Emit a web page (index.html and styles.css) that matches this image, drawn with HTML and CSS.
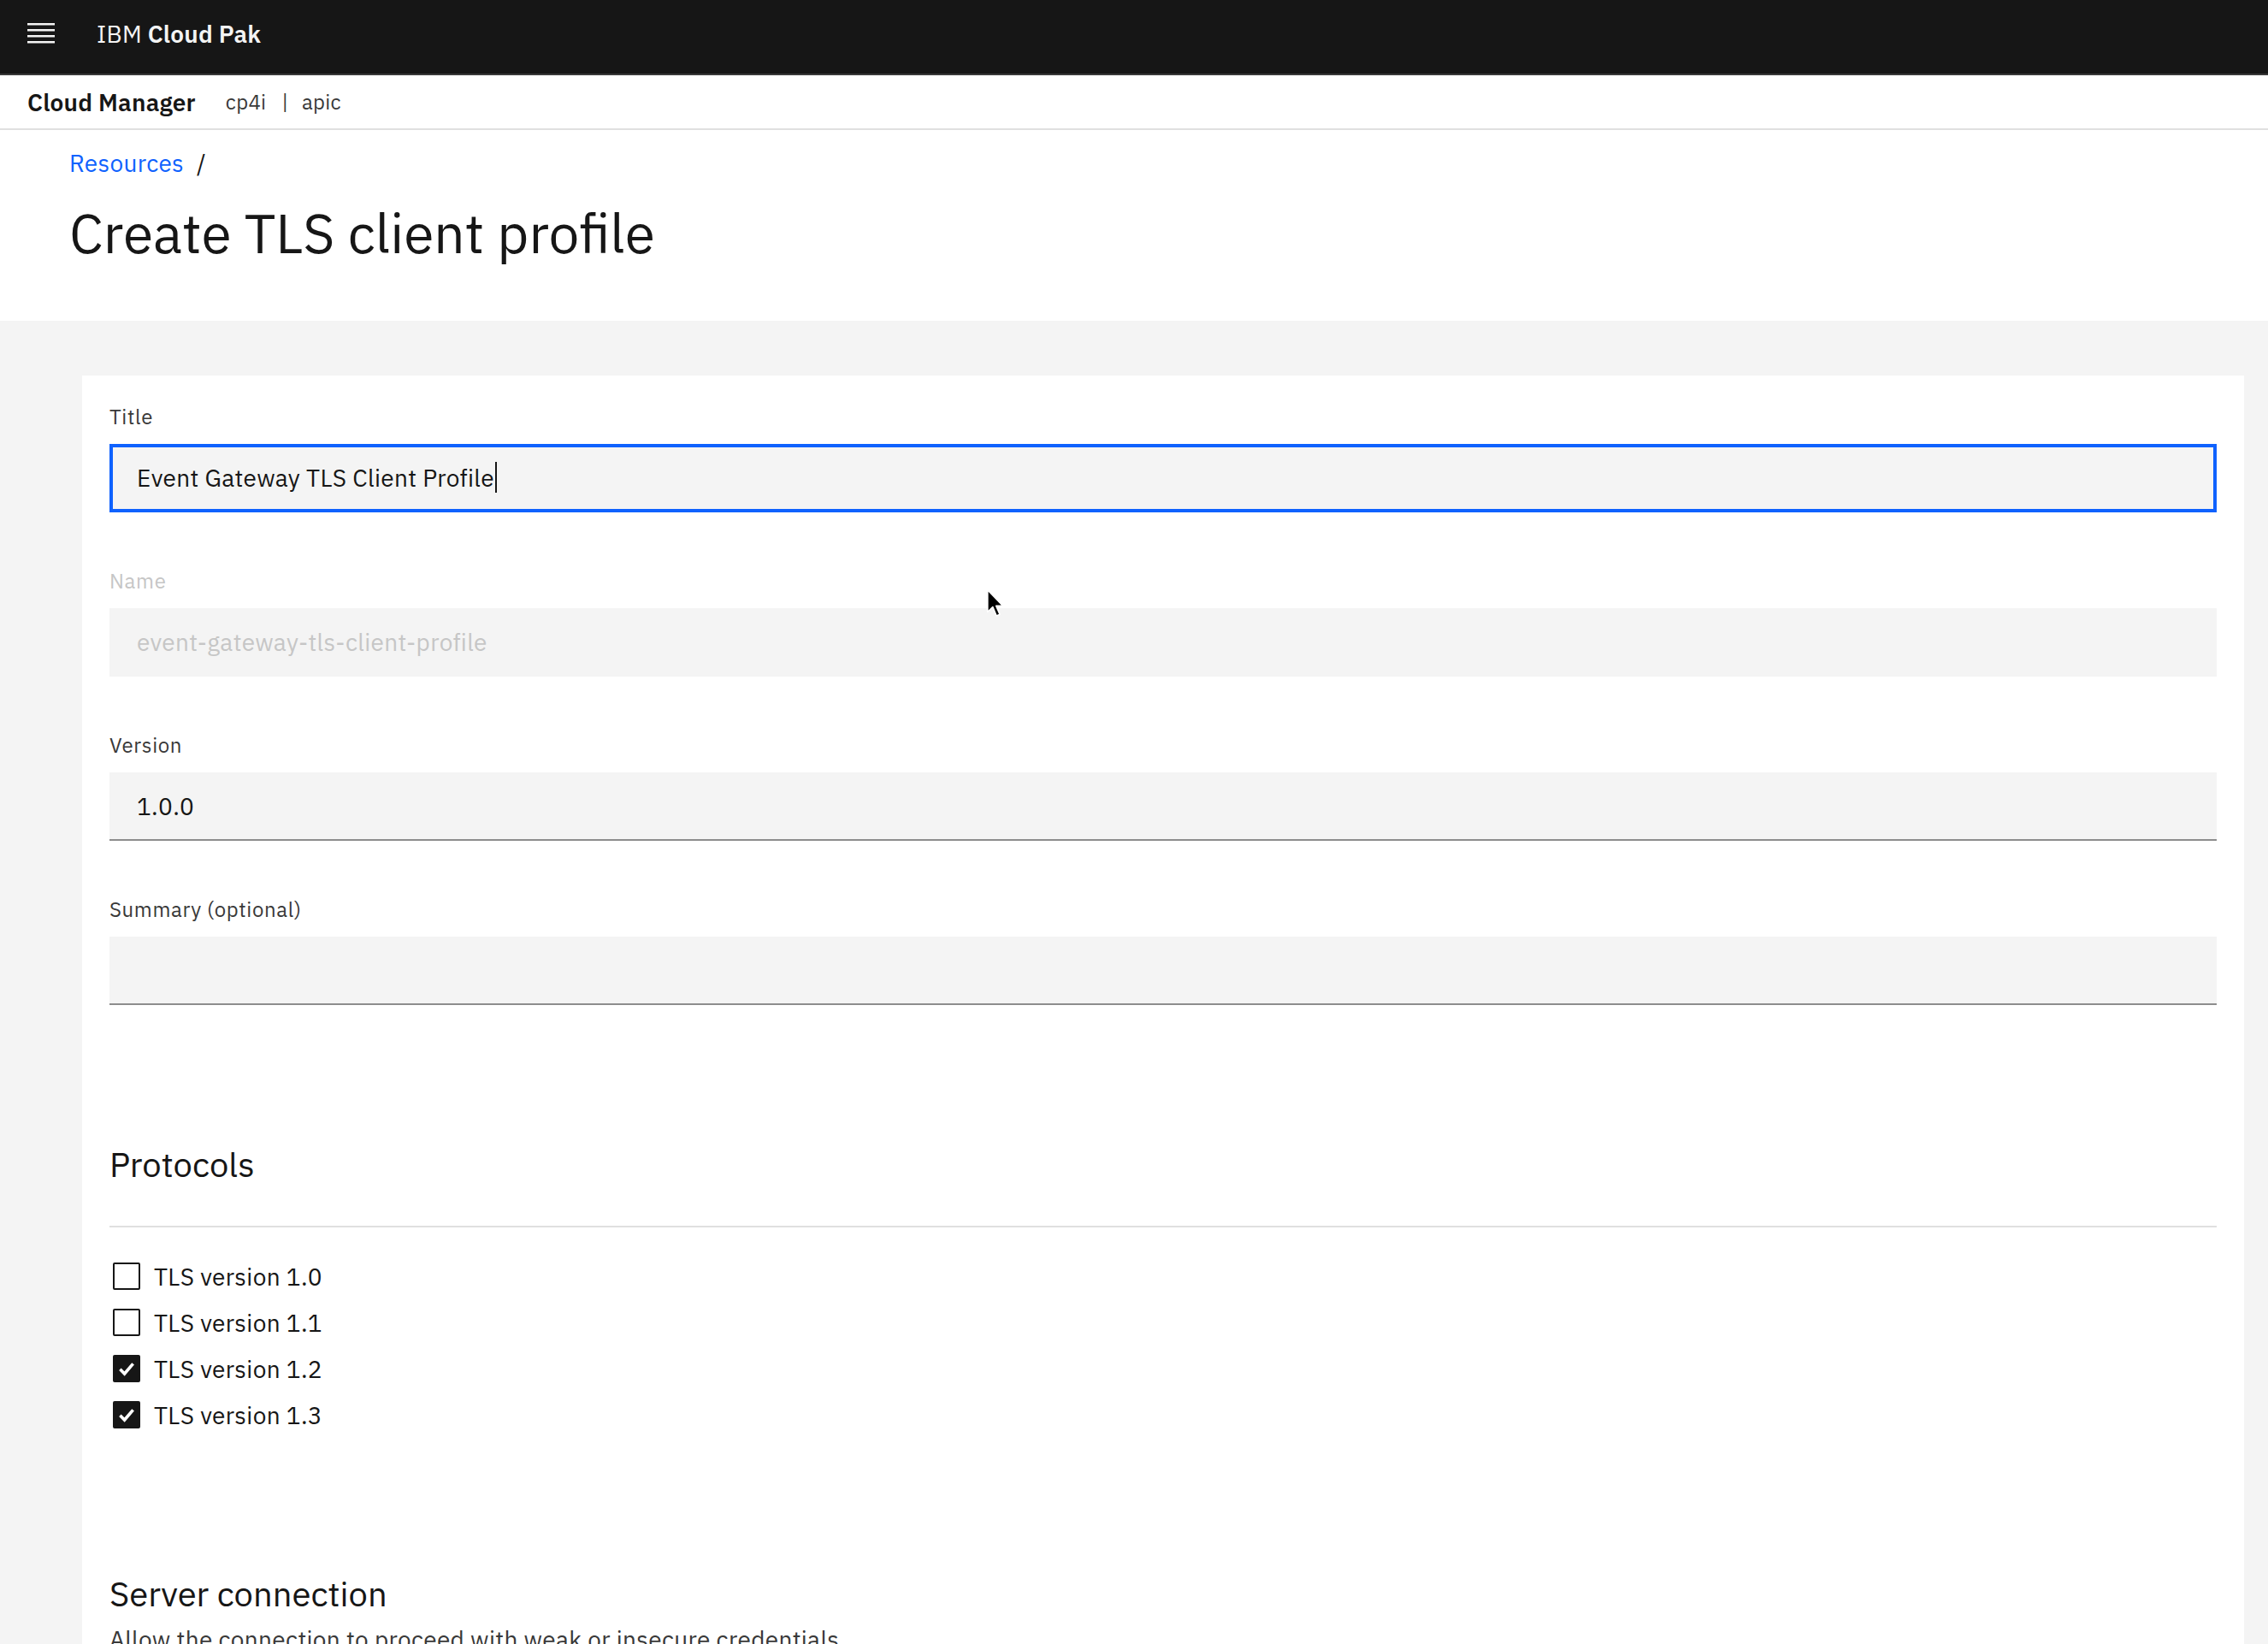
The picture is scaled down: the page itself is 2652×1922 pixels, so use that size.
FILE: index.html
```html
<!DOCTYPE html>
<html lang="en">
<head>
<meta charset="utf-8">
<title>Create TLS client profile</title>
<link rel="stylesheet" href="styles.css">
</head>
<body>
<header class="shell">
  <span class="menu-btn" aria-label="Menu">
    <svg width="32" height="24" viewBox="0 0 32 24" aria-hidden="true">
      <rect x="0" y="0" width="32" height="2.5" fill="#f4f4f4"/>
      <rect x="0" y="7" width="32" height="2.5" fill="#f4f4f4"/>
      <rect x="0" y="14" width="32" height="2.5" fill="#f4f4f4"/>
      <rect x="0" y="21" width="32" height="2.5" fill="#f4f4f4"/>
    </svg>
  </span>
  <span class="brand">IBM <b>Cloud Pak</b></span>
</header>

<div class="subbar">
  <span class="app-name">Cloud Manager</span>
  <span class="ctx">cp4i</span>
  <span class="ctx-sep">|</span>
  <span class="ctx">apic</span>
</div>

<section class="page-head">
  <nav class="breadcrumb">
    <a class="crumb" href="#">Resources</a><span class="crumb-sep">/</span>
  </nav>
  <h1 class="page-title">Create TLS client profile</h1>
</section>

<main class="content">
  <form class="card">
    <div class="form-item">
      <label class="label">Title</label>
      <div class="field is-focused">Event Gateway TLS Client Profile<span class="caret"></span></div>
    </div>
    <div class="form-item">
      <label class="label is-disabled">Name</label>
      <div class="field is-disabled">event-gateway-tls-client-profile</div>
    </div>
    <div class="form-item">
      <label class="label">Version</label>
      <div class="field">1.0.0</div>
    </div>
    <div class="form-item">
      <label class="label">Summary (optional)</label>
      <div class="field"></div>
    </div>

    <section class="group">
      <h2 class="group-title">Protocols</h2>
      <div class="group-body">
        <div class="check-row"><span class="box"></span><span class="check-label">TLS version 1.0</span></div>
        <div class="check-row"><span class="box"></span><span class="check-label">TLS version 1.1</span></div>
        <div class="check-row"><span class="box is-checked"><svg viewBox="0 0 16 16" width="32" height="32" aria-hidden="true"><polyline points="4.2,8.4 6.8,11 11.8,5.2" fill="none" stroke="#ffffff" stroke-width="1.8"/></svg></span><span class="check-label">TLS version 1.2</span></div>
        <div class="check-row"><span class="box is-checked"><svg viewBox="0 0 16 16" width="32" height="32" aria-hidden="true"><polyline points="4.2,8.4 6.8,11 11.8,5.2" fill="none" stroke="#ffffff" stroke-width="1.8"/></svg></span><span class="check-label">TLS version 1.3</span></div>
      </div>
    </section>

    <section class="group next">
      <h2 class="group-title server">Server connection</h2>
      <p class="group-desc">Allow the connection to proceed with weak or insecure credentials</p>
    </section>
  </form>
</main>

<div class="pointer" aria-hidden="true">
  <svg width="22" height="35" viewBox="0 0 13 21">
    <path d="M1 1 L1 16.5 L4.6 13 L7.2 19.2 L9.6 18.2 L7 12.2 L11.8 12.2 Z" fill="#000" stroke="#fff" stroke-width="1" stroke-linejoin="round"/>
  </svg>
</div>
</body>
</html>
```

FILE: styles.css
```css
* { box-sizing: border-box; }

html, body {
  margin: 0;
  padding: 0;
  background: #f4f4f4;
}

body {
  position: relative;
  font-family: "IBM Plex Sans", Roboto, "Liberation Sans", Arial, sans-serif;
  color: #161616;
  min-height: 1922px;
}

/* top shell header */
.shell {
  height: 88px;
  background: #161616;
  border-bottom: 2px solid #393939;
  padding-bottom: 8px;
  display: flex;
  align-items: center;
}

.menu-btn {
  display: flex;
  width: 32px;
  height: 24px;
  margin-left: 32px;
}

.brand {
  margin-left: 49px;
  font-size: 28px;
  color: #f4f4f4;
  letter-spacing: 0.2px;
}

.brand b {
  font-weight: 600;
}

/* sub bar */
.subbar {
  height: 64px;
  background: #ffffff;
  border-bottom: 2px solid #e0e0e0;
  display: flex;
  align-items: center;
  padding-left: 32px;
}

.app-name {
  font-size: 28px;
  font-weight: 600;
  margin-right: 35px;
  letter-spacing: 0.2px;
}

.ctx {
  font-size: 24px;
  color: #393939;
  letter-spacing: 0.3px;
}

.ctx-sep {
  font-size: 24px;
  color: #393939;
  margin: 0 16px 0 18px;
}

/* page header */
.page-head {
  background: #ffffff;
  padding: 21px 0 63px 81px;
}

.breadcrumb {
  display: flex;
  align-items: center;
  height: 36px;
  font-size: 28px;
  line-height: 36px;
  letter-spacing: 0.32px;
}

.crumb {
  color: #0f62fe;
  text-decoration: none;
}

.crumb-sep {
  margin-left: 15px;
  color: #161616;
}

.page-title {
  margin: 23px 0 0;
  font-size: 64px;
  line-height: 80px;
  font-weight: 400;
}

/* content */
.content {
  padding: 64px 28px 0 96px;
}

.card {
  background: #ffffff;
  padding: 32px 32px 400px;
}

.form-item {
  margin-bottom: 64px;
}

.label {
  display: block;
  font-size: 24px;
  line-height: 32px;
  letter-spacing: 0.64px;
  color: #393939;
  margin-bottom: 16px;
}

.label.is-disabled {
  color: #c6c6c6;
}

.field {
  height: 80px;
  background: #f4f4f4;
  border-bottom: 2px solid #8d8d8d;
  padding: 0 32px;
  display: flex;
  align-items: center;
  font-size: 28px;
  letter-spacing: 0.32px;
  color: #161616;
}

.field.is-focused {
  outline: 4px solid #0f62fe;
  outline-offset: -4px;
}

.field.is-disabled {
  border-bottom-color: transparent;
  color: #c6c6c6;
}

.caret {
  display: inline-block;
  width: 2px;
  height: 36px;
  background: #161616;
  margin-left: 1px;
}

/* groups */
.group {
  margin-top: 158px;
}

.group.next {
  margin-top: 154px;
}

.group-title {
  margin: 0;
  font-size: 40px;
  line-height: 56px;
  font-weight: 400;
  color: #161616;
}

.group-body {
  margin-top: 44px;
  border-top: 2px solid #e0e0e0;
  padding-top: 30px;
}

.check-row {
  display: flex;
  align-items: center;
  height: 54px;
}

.box {
  width: 32px;
  height: 32px;
  margin-left: 4px;
  margin-right: 16px;
  border: 2px solid #161616;
  border-radius: 2px;
  background: #ffffff;
  display: flex;
  align-items: center;
  justify-content: center;
  overflow: hidden;
}

.box.is-checked {
  background: #161616;
}

.box svg {
  flex: none;
}

.check-label {
  font-size: 28px;
  letter-spacing: 0.32px;
  color: #161616;
}

.group-desc {
  margin: 6px 0 0;
  font-size: 28px;
  line-height: 40px;
  letter-spacing: 0.32px;
  color: #393939;
}

/* mouse pointer overlay from the screenshot */
.pointer {
  position: absolute;
  left: 1153px;
  top: 688px;
  width: 22px;
  height: 35px;
  pointer-events: none;
}
```
